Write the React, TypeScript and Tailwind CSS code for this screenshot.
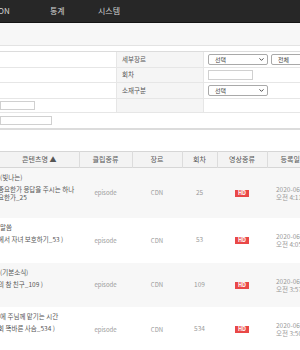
import { ChevronDown } from "lucide-react";

const rows = [
  { bg: "bg-[#f7f7f7]", h: "h-[50px]", title: "(빛나는)", sub: ["중요한가 응답을 주시는 하나", "요한가_25"], ep: "25", date: "오전 4:11" },
  { bg: "bg-white", h: "h-[45px]", title: "말씀", sub: ["에서 자녀 보호하기_53 )"], ep: "53", date: "오전 4:05" },
  { bg: "bg-[#f7f7f7]", h: "h-[44px]", title: "(기본소식)", sub: ["의 참 친구_109 )"], ep: "109", date: "오전 3:57" },
  { bg: "bg-white", h: "h-[45px]", title: "에 주님께 맡기는 시간", sub: ["회 똑바른 사슴_534 )"], ep: "534", date: "오전 3:50" },
];

const Select = ({ label, w }: { label: string; w: string }) => (
  <div className={`${w} h-[11px] border border-[#a9a9a9] rounded-[2px] bg-white flex items-center justify-between pl-[6px] pr-[2px] text-[6px] text-[#444]`}>
    <span>{label}</span>
    <ChevronDown className="w-[7px] h-[7px] text-[#333]" strokeWidth={3} />
  </div>
);

export default function App() {
  return (
    <div className="w-[300px] h-[350px] overflow-hidden bg-white text-[6.5px] text-[#666] font-['Noto_Sans_CJK_KR',sans-serif]">
      <header className="h-[23px] bg-[#272727] border-b border-[#141414] flex items-center text-[8px] text-[#d4d4d4]">
        <span className="-ml-[2px] w-[52px]">ON</span>
        <span className="w-[48px]">통계</span>
        <span>시스템</span>
      </header>
      <div className="h-[23px] bg-[#f7f7f7] border-b border-[#e3e3e3]" />

      {/* search form */}
      <div className="mt-[5px] border-t border-[#dcdcdc] border-b-2 border-b-[#dcdcdc]">
        <div className="grid grid-cols-[117px_87px_1fr] h-[16px] border-b border-[#e6e6e6]">
          <div className="border-r border-[#e6e6e6]" />
          <div className="bg-[#f5f5f5] border-r border-[#e6e6e6] pl-[5px] flex items-center text-[#555]">세부장르</div>
          <div className="flex items-center gap-[3px] pl-[4px]">
            <Select label="선택" w="w-[60px]" />
            <Select label="전체" w="w-[40px] shrink-0" />
          </div>
        </div>
        <div className="grid grid-cols-[117px_87px_1fr] h-[15px] border-b border-[#e6e6e6]">
          <div className="border-r border-[#e6e6e6]" />
          <div className="bg-[#f5f5f5] border-r border-[#e6e6e6] pl-[5px] flex items-center text-[#555]">회차</div>
          <div className="flex items-center pl-[4px]">
            <div className="w-[45px] h-[10px] border border-[#d0d0d0] bg-white" />
          </div>
        </div>
        <div className="grid grid-cols-[117px_87px_1fr] h-[16px] border-b border-[#e6e6e6]">
          <div className="border-r border-[#e6e6e6]" />
          <div className="bg-[#f5f5f5] border-r border-[#e6e6e6] pl-[5px] flex items-center text-[#555]">소재구분</div>
          <div className="flex items-center pl-[4px]">
            <Select label="선택" w="w-[60px]" />
          </div>
        </div>
        <div className="grid grid-cols-[117px_87px_1fr] h-[14px] border-b border-[#e6e6e6]">
          <div className="border-r border-[#e6e6e6] flex items-center">
            <div className="w-[35px] h-[9px] border border-[#d0d0d0] bg-white" />
          </div>
          <div className="bg-[#f5f5f5] border-r border-[#e6e6e6]" />
          <div />
        </div>
        <div className="h-[15px] flex items-center">
          <div className="w-[52px] h-[9px] border border-[#d0d0d0] bg-white" />
        </div>
      </div>

      {/* list */}
      <table className="mt-[21px] table-fixed w-[330px] border-collapse">
        <colgroup>
          <col className="w-[79px]" />
          <col className="w-[53px]" />
          <col className="w-[50px]" />
          <col className="w-[35px]" />
          <col className="w-[50px]" />
          <col className="w-[63px]" />
        </colgroup>
        <thead>
          <tr className="h-[16px] bg-[#f3f3f3] border-t border-b border-[#d6d6d6] text-[#555] text-[7px]">
            <th className="font-normal border-r border-[#dcdcdc]">콘텐츠명 ▲</th>
            <th className="font-normal border-r border-[#dcdcdc]">클립종류</th>
            <th className="font-normal border-r border-[#dcdcdc]">장르</th>
            <th className="font-normal border-r border-[#dcdcdc]">회차</th>
            <th className="font-normal border-r border-[#dcdcdc]">영상종류</th>
            <th className="font-normal text-left pl-[13px]">등록일</th>
          </tr>
        </thead>
        <tbody>
          {rows.map((r) => (
            <tr key={r.ep} className={`${r.bg} ${r.h}`}>
              <td className="align-top pt-[5px] text-[#555] whitespace-nowrap overflow-hidden">
                <div className="leading-[9px]">{r.title}</div>
                <div className="mt-[3px] leading-[8px] -ml-[2px]">
                  {r.sub.map((s) => (
                    <div key={s}>{s}</div>
                  ))}
                </div>
              </td>
              <td className="text-center text-[6px] text-[#999]">episode</td>
              <td className="text-center text-[6px] text-[#999]">CDN</td>
              <td className="text-center text-[#999]">{r.ep}</td>
              <td className="text-center">
                <span className="inline-block bg-[#e94848] text-white text-[5.5px] leading-[7px] px-[3px] font-bold">HD</span>
              </td>
              <td className="pl-[9px] text-[6.5px] leading-[8px] text-[#999] whitespace-nowrap">
                <div>2020-06-</div>
                <div>{r.date}</div>
              </td>
            </tr>
          ))}
        </tbody>
      </table>
    </div>
  );
}
